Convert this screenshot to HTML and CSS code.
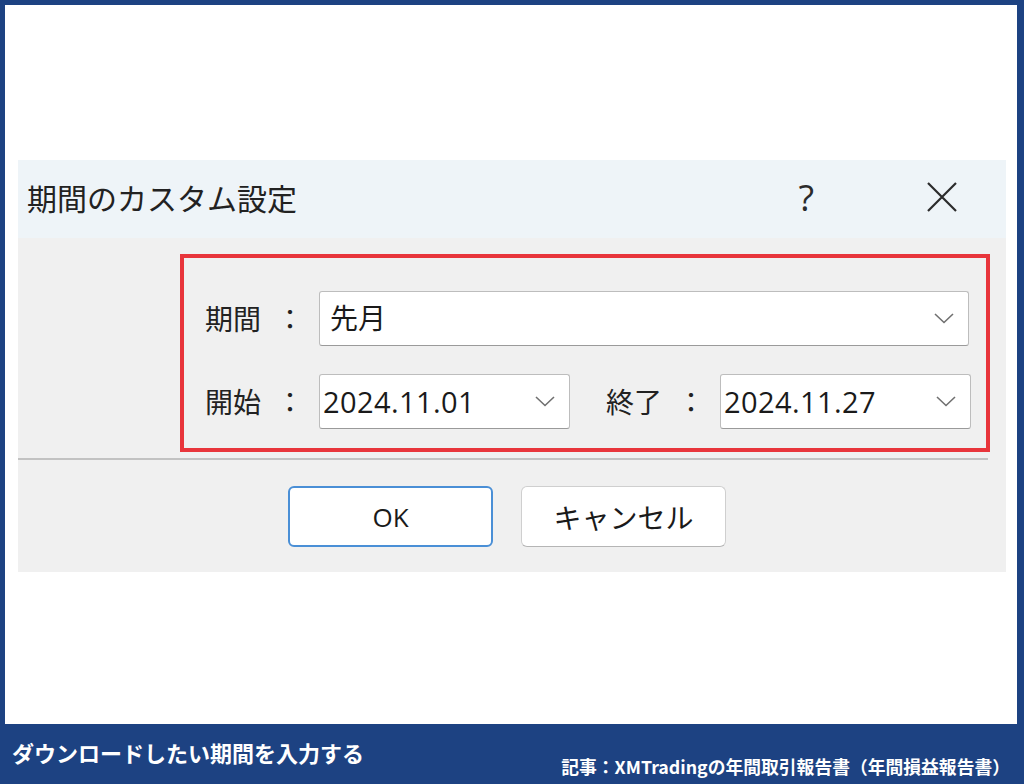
FILE: index.html
```html
<!DOCTYPE html>
<html lang="ja">
<head>
    <meta charset="UTF-8">
    <meta name="viewport" content="width=device-width, initial-scale=1.0">
    <title>期間のカスタム設定</title>
    <link rel="stylesheet" href="styles.css">
</head>
<body>
    <div class="frame">
        <div class="dialog">
            <div class="title-bar">
                <span class="title">期間のカスタム設定</span>
                <span class="help">?</span>
                <svg class="close" width="32" height="32" viewBox="0 0 32 32">
                    <path d="M2 2 L30 30 M30 2 L2 30" stroke="#2b2b2b" stroke-width="2.2" fill="none"/>
                </svg>
            </div>
            <div class="dialog-body">
                <div class="highlight">
                    <div class="field-row">
                        <label class="field-label">期間<span class="colon">：</span></label>
                        <div class="select select-wide">
                            <span class="select-value jp">先月</span>
                            <svg class="chevron" width="20" height="11" viewBox="0 0 20 11"><path d="M1 1 L10 9.5 L19 1" stroke="#707070" stroke-width="1.6" fill="none"/></svg>
                        </div>
                    </div>
                    <div class="field-row">
                        <label class="field-label">開始<span class="colon">：</span></label>
                        <div class="select">
                            <span class="select-value">2024.11.01</span>
                            <svg class="chevron" width="20" height="11" viewBox="0 0 20 11"><path d="M1 1 L10 9.5 L19 1" stroke="#707070" stroke-width="1.6" fill="none"/></svg>
                        </div>
                        <label class="field-label field-label-end">終了<span class="colon">：</span></label>
                        <div class="select">
                            <span class="select-value">2024.11.27</span>
                            <svg class="chevron" width="20" height="11" viewBox="0 0 20 11"><path d="M1 1 L10 9.5 L19 1" stroke="#707070" stroke-width="1.6" fill="none"/></svg>
                        </div>
                    </div>
                </div>
                <div class="divider"></div>
                <div class="buttons">
                    <button class="btn btn-primary">OK</button>
                    <button class="btn">キャンセル</button>
                </div>
            </div>
        </div>
    </div>
    <div class="caption">
        <span class="caption-main">ダウンロードしたい期間を入力する</span>
        <span class="caption-source">記事：XMTradingの年間取引報告書（年間損益報告書）</span>
    </div>
</body>
</html>
```

FILE: styles.css
```css
body {
    margin: 0;
    font-family: "Noto Sans CJK JP", "Noto Sans", sans-serif;
    background: #1d4282;
}

.frame {
    height: 724px;
    box-sizing: border-box;
    background: white;
    border-top: 5px solid #1d4282;
    border-left: 5px solid #1d4282;
    border-right: 7px solid #1d4282;
    padding: 155px 0 0 13px;
}

.dialog {
    width: 988px;
    background: #f0f0f0;
}

.title-bar {
    height: 78px;
    background: #eef4f8;
    display: flex;
    align-items: center;
    padding-left: 9px;
    color: #222;
}

.title {
    font-size: 30px;
    flex: 1;
    margin-top: -4px;
}

.help {
    font-family: "Open Sans", sans-serif;
    font-size: 36px;
    margin-right: 112px;
    margin-top: -4px;
    color: #2b2b2b;
}

.close {
    margin-right: 48px;
    margin-top: -4px;
}

.dialog-body {
    padding: 16px 16px 25px 0;
}

.highlight {
    margin-left: 162px;
    border: 4px solid #e8353b;
    padding: 33px 15px 19px 21px;
    display: flex;
    flex-direction: column;
    gap: 28px;
}

.field-row {
    display: flex;
    align-items: center;
}

.field-label {
    width: 114px;
    font-size: 28px;
    color: #222;
    margin-top: -2px;
}

.colon {
    margin-left: 15px;
}

.field-label-end {
    margin-left: 36px;
}

.select {
    width: 251px;
    height: 55px;
    box-sizing: border-box;
    background: white;
    border: 1px solid #bdbdbd;
    border-bottom-color: #9a9a9a;
    border-radius: 3px;
    display: flex;
    align-items: center;
    padding: 0 14px 0 3px;
}

.select-wide {
    width: 650px;
}

.select-value {
    flex: 1;
    font-family: "Open Sans", sans-serif;
    font-size: 29px;
    color: #1a1a1a;
    letter-spacing: 0.4px;
}

.select-value.jp {
    font-family: "Noto Sans CJK JP", sans-serif;
    font-size: 28px;
    padding-left: 7px;
    margin-top: -3px;
    letter-spacing: 0;
}

.divider {
    height: 2px;
    background: #c2c2c2;
    margin: 6px 2px 0 0;
}

.buttons {
    display: flex;
    gap: 28px;
    padding: 26px 0 0 270px;
}

.btn {
    width: 205px;
    height: 61px;
    background: white;
    border: 1px solid #cfcfcf;
    border-bottom-color: #b5b5b5;
    border-radius: 6px;
    font-family: "Noto Sans CJK JP", sans-serif;
    font-size: 28px;
    color: #1a1a1a;
    padding: 0;
}

.btn-primary {
    border: 2px solid #4a8fd6;
    font-family: "Open Sans", sans-serif;
    font-size: 26px;
}

.caption {
    height: 60px;
    display: flex;
    justify-content: space-between;
    padding: 0 14px 0 12px;
    color: white;
    font-weight: bold;
}

.caption-main {
    font-size: 22px;
    margin-top: 12px;
    align-self: flex-start;
}

.caption-source {
    font-size: 17.8px;
    align-self: flex-end;
    margin-bottom: 5px;
}
```
